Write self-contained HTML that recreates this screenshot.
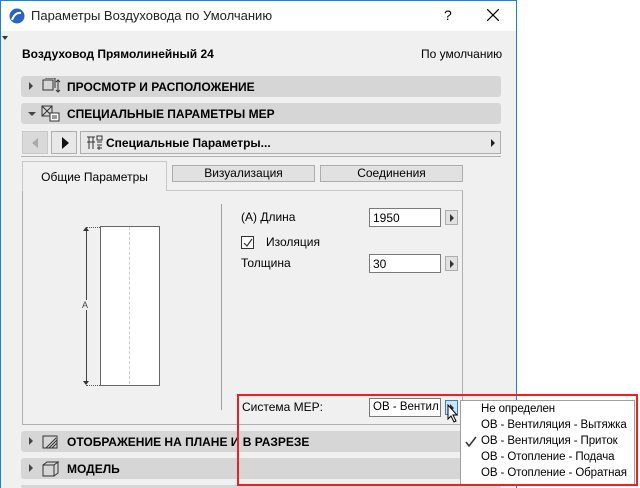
<!DOCTYPE html>
<html style="width:640px;height:488px;overflow:hidden"><head><meta charset="utf-8"><style>
*{box-sizing:border-box;margin:0;padding:0}
body{width:640px;height:488px;background:#fff;position:relative;overflow:hidden;font-family:"Liberation Sans","DejaVu Sans",sans-serif;font-size:12px;color:#000;white-space:nowrap}
.a{position:absolute}
.dlg{left:0;top:0;width:517px;height:488px;background:#f0f0f0;border-left:1px solid #1883d7;border-right:1px solid #1883d7;border-top:1px solid #1883d7}
.title{left:1px;top:1px;width:515px;height:30px;background:#fff}
.bar{left:21px;width:480px;height:21px;background:#d6d6d6;border-radius:3px;font-weight:bold;font-size:12px;overflow:hidden}
.bar span{position:absolute;left:46px;top:4px}
.tri{position:absolute;left:8px;top:6px;width:0;height:0;border-top:4px solid transparent;border-bottom:4px solid transparent;border-left:4px solid #444}
.inp{background:#fff;border:1px solid #7a7a7a;height:19px;width:72px;padding:2px 3px;font-size:12px;overflow:hidden}
.btn{width:13px;height:15px;border:1px solid #adadad;background:#e1e1e1}
.btn:after{content:"";position:absolute;left:4px;top:3px;border-top:4px solid transparent;border-bottom:4px solid transparent;border-left:4px solid #333}
.tab{height:17px;border:1px solid #adadad;background:#e1e1e1;text-align:center;font-size:12px;line-height:15px}
.mi{position:absolute;left:20px;font-size:11.5px;letter-spacing:-0.1px}
</style></head><body>
<div class="a dlg"></div>
<div class="a title"></div>
<svg class="a" style="left:9px;top:8px" width="16" height="16"><circle cx="8" cy="8" r="7.5" fill="#2b63c4"/><path d="M3 12 Q6 4 12 5" stroke="#fff" stroke-width="2" fill="none"/></svg>
<div class="a" style="left:31px;top:8px;font-size:13px;color:#222">Параметры Воздуховода по Умолчанию</div>
<div class="a" style="left:444px;top:7px;font-size:14px">?</div>
<svg class="a" style="left:487px;top:9px" width="12" height="12"><path d="M0 0L12 12M12 0L0 12" stroke="#000" stroke-width="1.2"/></svg>
<div class="a" style="left:2px;top:36px;border-left:3px solid transparent;border-right:3px solid transparent;border-top:4px solid #333"></div>
<div class="a" style="left:22px;top:47px;font-weight:bold">Воздуховод Прямолинейный 24</div>
<div class="a" style="left:421px;top:47px">По умолчанию</div>

<div class="a bar" style="top:76px"><i class="tri"></i><svg class="a" style="left:20px;top:2px" width="20" height="17"><rect x="2" y="2" width="10" height="10" fill="none" stroke="#333"/><path d="M4 0h10v10" fill="none" stroke="#333"/><path d="M17 2v12M15 4l2-2 2 2M15 12l2 2 2-2" stroke="#333" fill="none"/></svg><span>ПРОСМОТР И РАСПОЛОЖЕНИЕ</span></div>
<div class="a bar" style="top:103px"><div class="a" style="left:7px;top:9px;border-left:4px solid transparent;border-right:4px solid transparent;border-top:4px solid #444"></div><svg class="a" style="left:20px;top:2px" width="20" height="17"><rect x="1" y="1" width="10" height="10" fill="none" stroke="#333"/><path d="M1 1l10 10M11 1L1 11" stroke="#333"/><rect x="9" y="8" width="9" height="8" fill="#fff" stroke="#333"/><path d="M11 11h5M11 13h5" stroke="#333"/></svg><span>СПЕЦИАЛЬНЫЕ ПАРАМЕТРЫ MEP</span></div>

<div class="a" style="left:22px;top:131px;width:26px;height:23px;background:#d9d9d9;border:1px solid #c8c8c8"><div class="a" style="left:9px;top:6px;border-top:5px solid transparent;border-bottom:5px solid transparent;border-right:6px solid #aaa"></div></div>
<div class="a" style="left:51px;top:131px;width:26px;height:23px;background:#e8e8e8;border:1px solid #adadad"><div class="a" style="left:10px;top:5px;border-top:6px solid transparent;border-bottom:6px solid transparent;border-left:7px solid #111"></div></div>
<div class="a" style="left:80px;top:131px;width:421px;height:23px;background:#e8e8e8;border:1px solid #adadad"><svg class="a" style="left:5px;top:3px" width="18" height="16"><path d="M1 2h8M3 2v12M7 2v12M1 7h8M11 1h5v4h-5zM11 7h5M11 10h5M11 13h5M13 11v4" stroke="#333" fill="none"/></svg><div class="a" style="left:25px;top:4px;font-weight:bold">Специальные Параметры...</div><div class="a" style="left:410px;top:7px;border-top:4px solid transparent;border-bottom:4px solid transparent;border-left:4px solid #222"></div></div>
<div class="a" style="left:21px;top:156px;width:480px;height:1px;background:#b0b0b0"></div>

<div class="a" style="left:22px;top:190px;width:441px;height:235px;border:1px solid #b0b0b0;border-top:1px solid #c8c8c8"></div>
<div class="a" style="left:22px;top:161px;width:145px;height:30px;border:1px solid #c8c8c8;border-bottom:none;background:#f0f0f0;text-align:center;padding-top:8px">Общие Параметры</div>
<div class="a tab" style="left:172px;top:165px;width:143px">Визуализация</div>
<div class="a tab" style="left:320px;top:165px;width:143px">Соединения</div>

<div class="a" style="left:100px;top:226px;width:60px;height:160px;background:#fff;border:1px solid #666"></div>
<div class="a" style="left:129px;top:227px;height:157px;border-left:1px dashed #ccc"></div>
<div class="a" style="left:86px;top:228px;height:156px;width:1px;background:#444"></div>
<div class="a" style="left:86px;top:227px;width:14px;border-top:1px dotted #555"></div>
<div class="a" style="left:86px;top:385px;width:14px;border-top:1px dotted #555"></div>
<div class="a" style="left:83px;top:227px;border-left:3px solid transparent;border-right:3px solid transparent;border-bottom:4px solid #333"></div>
<div class="a" style="left:83px;top:381px;border-left:3px solid transparent;border-right:3px solid transparent;border-top:4px solid #333"></div>
<div class="a" style="left:82px;top:300px;background:#f0f0f0;font-size:9px;color:#444">A</div>
<div class="a" style="left:221px;top:204px;width:1px;height:206px;background:#a0a0a0"></div>

<div class="a" style="left:241px;top:210px">(A) Длина</div>
<div class="a inp" style="left:369px;top:208px">1950</div>
<div class="a btn" style="left:445px;top:210px"></div>
<div class="a" style="left:241px;top:236px;width:13px;height:13px;border:1px solid #333;background:#fff"><svg class="a" style="left:1px;top:1px" width="10" height="10"><path d="M1 5l3 3 5-7" stroke="#333" fill="none" stroke-width="1.2"/></svg></div>
<div class="a" style="left:266px;top:235px">Изоляция</div>
<div class="a" style="left:241px;top:256px">Толщина</div>
<div class="a inp" style="left:369px;top:254px">30</div>
<div class="a btn" style="left:445px;top:256px"></div>

<div class="a" style="left:242px;top:400px">Система MEP:</div>
<div class="a inp" style="left:369px;top:398px;width:72px;font-size:11.5px">ОВ - Вентил</div>
<div class="a btn" style="left:445px;top:400px;background:#cce4f7;border-color:#3c7fb1"></div>
<svg class="a" style="left:447px;top:404px" width="14" height="20"><path d="M1 1v14l3-3 3 6 2-1-3-6h4z" fill="#fff" stroke="#000"/></svg>

<div class="a bar" style="top:431px"><i class="tri"></i><svg class="a" style="left:20px;top:2px" width="20" height="17"><rect x="2" y="3" width="14" height="12" fill="none" stroke="#333"/><path d="M8 15l8-8M11 15l5-5M5 15l10-10" stroke="#333"/></svg><span>ОТОБРАЖЕНИЕ НА ПЛАНЕ И В РАЗРЕЗЕ</span></div>
<div class="a bar" style="top:458px"><i class="tri"></i><svg class="a" style="left:20px;top:2px" width="20" height="17"><path d="M2 5h11v11H2zM2 5l4-3h11l-4 3M17 2v11l-4 3" fill="none" stroke="#333"/></svg><span>МОДЕЛЬ</span></div>
<div class="a bar" style="top:485px;height:3px"></div>

<div class="a" style="left:460px;top:400px;width:175px;height:86px;background:#fff;border:1px solid #a0a0a0;overflow:hidden">
<div class="mi" style="top:2px">Не определен</div>
<div class="mi" style="top:18px">ОВ - Вентиляция - Вытяжка</div>
<div class="mi" style="top:34px">ОВ - Вентиляция - Приток</div>
<div class="mi" style="top:50px">ОВ - Отопление - Подача</div>
<div class="mi" style="top:66px">ОВ - Отопление - Обратная</div>
<svg class="a" style="left:4px;top:35px" width="12" height="12"><path d="M1 6l3 4 7-9" stroke="#333" fill="none" stroke-width="1.5"/></svg>
</div>
<div class="a" style="left:237px;top:394px;width:401px;height:92px;border:2px solid #f02020"></div>
</body></html>
